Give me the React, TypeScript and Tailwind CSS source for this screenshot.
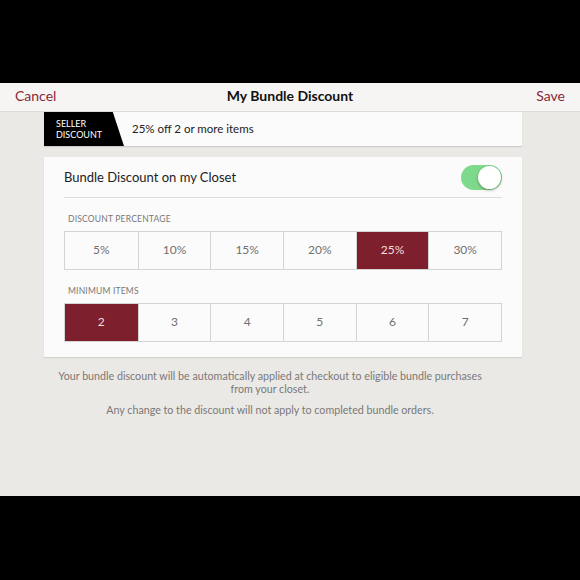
import React from "react";

const pct = ["5%", "10%", "15%", "20%", "25%", "30%"];
const items = ["2", "3", "4", "5", "6", "7"];

function Segmented({ options, selected }: { options: string[]; selected: string }) {
  return (
    <div className="grid grid-cols-6 border border-[#d5d3d3]">
      {options.map((o, i) => (
        <div
          key={o}
          className={
            "h-[37px] flex items-center justify-center text-[12px] " +
            (i > 0 ? "border-l border-[#d5d3d3] " : "") +
            (o === selected ? "bg-[#7e1f2d] text-[#f3dede]" : "text-[#707070]")
          }
        >
          {o}
        </div>
      ))}
    </div>
  );
}

export default function App() {
  return (
    <div
      className="w-[580px] h-[580px] bg-black flex flex-col"
      style={{ fontFamily: "Lato, 'Open Sans', sans-serif" }}
    >
      <div className="h-[83px] shrink-0" />
      <div className="h-[29px] shrink-0 bg-[#f6f5f3] border-b border-[#dcdad6] flex items-center justify-between px-[15px] pb-[3px] relative">
        <span className="text-[14px] text-[#85293a]">Cancel</span>
        <span className="absolute left-0 right-0 text-center text-[14px] font-bold text-[#111] pointer-events-none">
          My Bundle Discount
        </span>
        <span className="text-[14px] text-[#85293a]">Save</span>
      </div>
      <div className="h-[384px] shrink-0 bg-[#ebe9e5] flex flex-col items-start pl-[44px]">
        <div className="w-[478px] h-[34px] bg-[#fcfbfb] flex items-stretch shadow-[0_1px_1px_rgba(0,0,0,0.12)]">
          <div
            className="w-[80px] bg-black text-white text-[9px] leading-[11px] pl-[12px] flex flex-col justify-center"
            style={{ clipPath: "polygon(0 0, 86% 0, 100% 100%, 0 100%)" }}
          >
            <span>SELLER</span>
            <span>DISCOUNT</span>
          </div>
          <div className="flex items-center pl-[8px] text-[11.5px] text-[#222]">25% off 2 or more items</div>
        </div>
        <div className="w-[478px] mt-[11px] bg-[#fcfbfb] px-[20px] pb-[15px] shadow-[0_1px_1px_rgba(0,0,0,0.1)]">
          <div className="h-[41px] flex items-center justify-between border-b border-[#dddbdb]">
            <span className="text-[13px] text-[#222] pt-[2px]">Bundle Discount on my Closet</span>
            <div className="w-[41px] h-[25px] rounded-full bg-[#7fd98c] relative">
              <div className="absolute right-[1px] top-[1px] w-[23px] h-[23px] rounded-full bg-white shadow-[0_1px_3px_rgba(0,0,0,0.35)]" />
            </div>
          </div>
          <div className="pt-[15px] pb-[5px] pl-[4px] text-[8.5px] text-[#777] tracking-[0.2px]">DISCOUNT PERCENTAGE</div>
          <Segmented options={pct} selected="25%" />
          <div className="pt-[15px] pb-[5px] pl-[4px] text-[8.5px] text-[#777] tracking-[0.2px]">MINIMUM ITEMS</div>
          <Segmented options={items} selected="2" />
        </div>
        <div className="w-[452px] mt-[12px] text-center text-[10.7px] text-[#7a7878] leading-[13px]">
          <p>Your bundle discount will be automatically applied at checkout to eligible bundle purchases</p>
          <p>from your closet.</p>
          <p className="mt-[8px]">Any change to the discount will not apply to completed bundle orders.</p>
        </div>
      </div>
      <div className="flex-1" />
    </div>
  );
}
